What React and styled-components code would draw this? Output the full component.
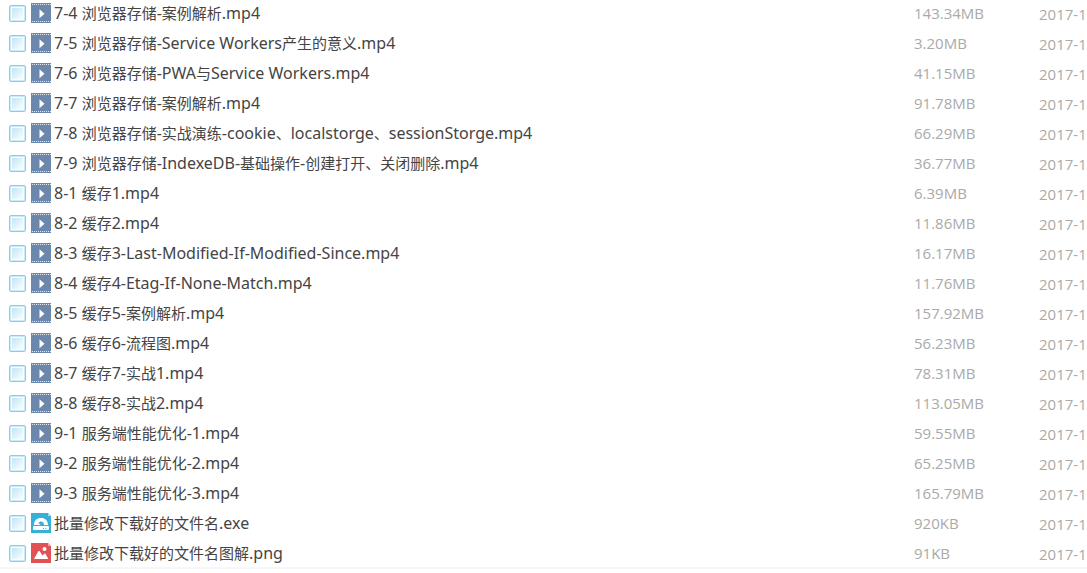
import React, { useState } from 'react';
import styled, { createGlobalStyle } from 'styled-components';

const files = [
  { name: '7-4 浏览器存储-案例解析.mp4', size: '143.34MB', type: 'video' },
  { name: '7-5 浏览器存储-Service Workers产生的意义.mp4', size: '3.20MB', type: 'video' },
  { name: '7-6 浏览器存储-PWA与Service Workers.mp4', size: '41.15MB', type: 'video' },
  { name: '7-7 浏览器存储-案例解析.mp4', size: '91.78MB', type: 'video' },
  { name: '7-8 浏览器存储-实战演练-cookie、localstorge、sessionStorge.mp4', size: '66.29MB', type: 'video' },
  { name: '7-9 浏览器存储-IndexeDB-基础操作-创建打开、关闭删除.mp4', size: '36.77MB', type: 'video' },
  { name: '8-1 缓存1.mp4', size: '6.39MB', type: 'video' },
  { name: '8-2 缓存2.mp4', size: '11.86MB', type: 'video' },
  { name: '8-3 缓存3-Last-Modified-If-Modified-Since.mp4', size: '16.17MB', type: 'video' },
  { name: '8-4 缓存4-Etag-If-None-Match.mp4', size: '11.76MB', type: 'video' },
  { name: '8-5 缓存5-案例解析.mp4', size: '157.92MB', type: 'video' },
  { name: '8-6 缓存6-流程图.mp4', size: '56.23MB', type: 'video' },
  { name: '8-7 缓存7-实战1.mp4', size: '78.31MB', type: 'video' },
  { name: '8-8 缓存8-实战2.mp4', size: '113.05MB', type: 'video' },
  { name: '9-1 服务端性能优化-1.mp4', size: '59.55MB', type: 'video' },
  { name: '9-2 服务端性能优化-2.mp4', size: '65.25MB', type: 'video' },
  { name: '9-3 服务端性能优化-3.mp4', size: '165.79MB', type: 'video' },
  { name: '批量修改下载好的文件名.exe', size: '920KB', type: 'exe' },
  { name: '批量修改下载好的文件名图解.png', size: '91KB', type: 'image' },
];

const VideoIcon = () => (
  <FileSvg viewBox="0 0 20 20" aria-hidden="true">
    <rect width="20" height="20" fill="#6b87ac" />
    <path
      d="M1 1.5H20M1 18.5H20"
      stroke="#e3e9f1"
      strokeWidth="1"
      strokeDasharray="1 1"
    />
    <path d="M8.5 6.2L13.5 10.7L8.5 15.2Z" fill="#fff" />
  </FileSvg>
);

const ExeIcon = () => (
  <FileSvg viewBox="0 0 20 20" aria-hidden="true">
    <path d="M0 0H17L20 3V20H0Z" fill="#35b0d9" />
    <path d="M17 0L20 3H17Z" fill="#a5dced" />
    <path
      d="M3 12C3 7.5 6 5 10 5S17 7.5 17 12H13C13 9.5 11.5 8.5 10 8.5C9 8.5 8 9 7.5 10L9.5 12Z"
      fill="#fff"
    />
    <rect x="2" y="13" width="16" height="4" rx="1" fill="#fff" />
    <path d="M12 15.5H13M14.5 15.5H15.5" stroke="#35b0d9" />
  </FileSvg>
);

const ImageIcon = () => (
  <FileSvg viewBox="0 0 20 20" aria-hidden="true">
    <path d="M0 0H17L20 3V20H0Z" fill="#e05254" />
    <path d="M17 0L20 3H17Z" fill="#f0a9aa" />
    <path
      d="M3 16L7.3 8.3Q8 7.5 8.7 8.3L11.5 12.5L13.4 10.7Q14 10.2 14.5 10.8L17.3 16Z"
      fill="#fff"
    />
    <circle cx="13.5" cy="6" r="2" fill="#fff" />
  </FileSvg>
);

const icons = { video: VideoIcon, exe: ExeIcon, image: ImageIcon };

// 中文比英文数字小一号
const renderName = (name) =>
  name
    .split(/([\u3001\u4e00-\u9fff]+)/)
    .map((part, i) => (i % 2 ? <Chinese key={i}>{part}</Chinese> : part));

const FileRow = ({ file, checked, onToggle }) => {
  const Icon = icons[file.type];

  return (
    <tr>
      <Cell>
        <FileLabel>
          <CheckBox type="checkbox" checked={checked} onChange={onToggle} />
          <Icon />
          <FileName>{renderName(file.name)}</FileName>
        </FileLabel>
      </Cell>
      <MetaCell>{file.size}</MetaCell>
      <DateCell>2017-1</DateCell>
    </tr>
  );
};

const App = () => {
  const [selected, setSelected] = useState([]);

  const toggle = (name) => {
    setSelected((prev) =>
      prev.includes(name) ? prev.filter((n) => n !== name) : [...prev, name],
    );
  };

  return (
    <>
      <GlobalStyle />
      <FileTable>
        <colgroup>
          <col />
          <SizeCol />
          <DateCol />
        </colgroup>
        <tbody>
          {files.map((file) => (
            <FileRow
              key={file.name}
              file={file}
              checked={selected.includes(file.name)}
              onToggle={() => toggle(file.name)}
            />
          ))}
        </tbody>
      </FileTable>
      <ListFooter />
    </>
  );
};

const GlobalStyle = createGlobalStyle`
  * {
    box-sizing: border-box;
  }

  body {
    margin: 0;
    background: #fff;
    font-family: 'Noto Sans', 'Noto Sans CJK SC', sans-serif;
    overflow-x: hidden;
  }
`;

const FileTable = styled.table`
  width: 100%;
  table-layout: fixed;
  border-collapse: collapse;
`;

const SizeCol = styled.col`
  width: 125px;
`;

const DateCol = styled.col`
  width: 48px;
`;

const Cell = styled.td`
  height: 30px;
  padding: 0 0 4px;
  vertical-align: top;
  white-space: nowrap;
`;

const MetaCell = styled(Cell)`
  color: #aaa;
  font-family: 'Open Sans', sans-serif;
  font-size: 15px;
  line-height: 26px;
`;

const DateCell = styled(MetaCell)`
  padding: 1px 0 3px;
`;

const FileLabel = styled.label`
  display: flex;
  align-items: center;
  height: 26px;
  padding-left: 9px;
  cursor: pointer;
`;

const CheckBox = styled.input`
  appearance: none;
  flex: none;
  width: 17px;
  height: 17px;
  margin: 0 5px 0 0;
  border: 1px solid #8ccbea;
  border-radius: 2px;
  background: linear-gradient(135deg, #b9dff0, #f6fcff 80%);
  box-shadow:
    inset 0 0 0 1px #c9ecfb,
    inset 0 0 0 2px #f8fdff;

  &:checked {
    background: #4fb0dd;
  }
`;

const FileSvg = styled.svg`
  flex: none;
  width: 20px;
  height: 20px;
  margin-right: 3px;
`;

const FileName = styled.span`
  color: #444;
  font-size: 16px;
  line-height: 26px;
`;

const Chinese = styled.span`
  font-size: 15px;
  line-height: 1;
`;

const ListFooter = styled.div`
  height: 2px;
  margin-top: -3px;
  background: #f7f7f7;
`;

export default App;
